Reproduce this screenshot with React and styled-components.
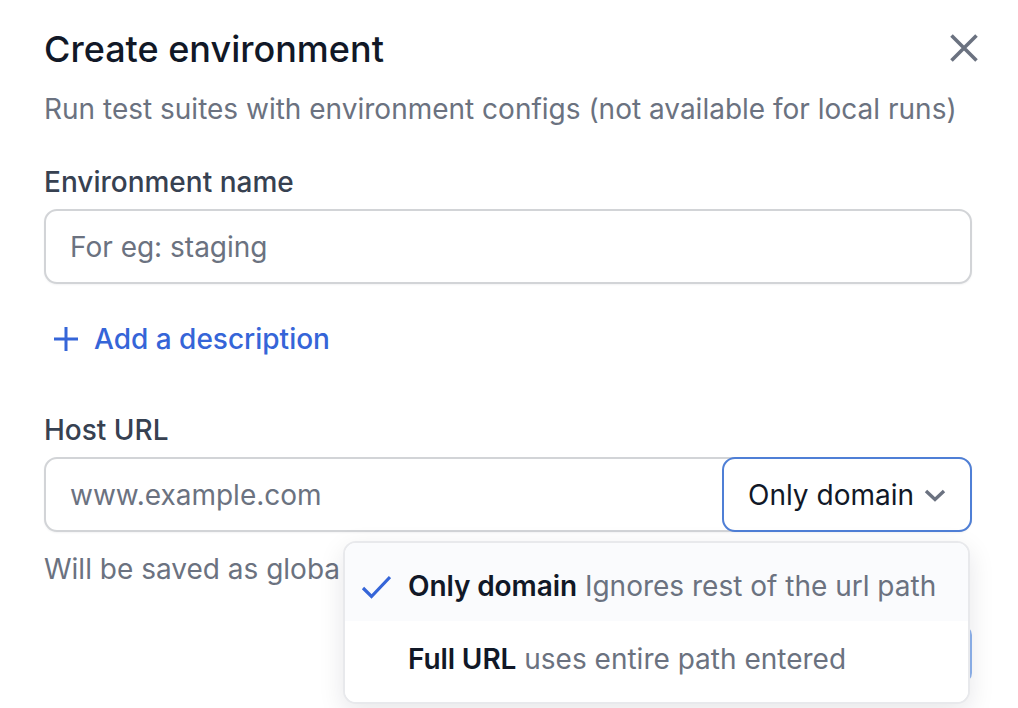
import React from 'react';
import styled, { createGlobalStyle } from 'styled-components';

const GlobalStyle = createGlobalStyle`
  html, body {
    margin: 0;
    height: 100%;
    background: #ffffff;
    overflow: hidden;
  }
  body {
    font-family: "Inter", "Liberation Sans", sans-serif;
    -webkit-font-smoothing: antialiased;
  }
`;

const Modal = styled.div`
  position: relative;
  width: 1018px;
  height: 708px;
  box-sizing: border-box;
  padding: 26px 46px 0 44px;
  overflow: hidden;
`;

const Header = styled.div`
  display: flex;
  justify-content: space-between;
  align-items: center;
  height: 46px;
`;

const Title = styled.h1`
  margin: 0;
  font-size: 36px;
  line-height: 46px;
  font-weight: 500;
  color: #111827;
`;

const CloseButton = styled.button`
  display: flex;
  padding: 0;
  margin-right: -16px;
  border: none;
  background: none;
  color: #6b7280;
`;

const Subtitle = styled.p`
  margin: 19px 0 0;
  font-size: 28px;
  line-height: 36px;
  color: #6b7280;
`;

const Label = styled.label`
  display: block;
  margin-top: ${(p) => p.$top}px;
  font-size: 28px;
  line-height: 36px;
  font-weight: 500;
  color: #374151;
`;

const InputBox = styled.div`
  display: flex;
  align-items: stretch;
  height: 75px;
  margin-top: 9px;
  box-sizing: border-box;
  border: 2px solid #d2d4d7;
  border-radius: 13px;
  background: #ffffff;
  box-shadow: 0 1px 2px rgba(17, 24, 39, 0.05);
`;

const Placeholder = styled.span`
  flex: 1;
  align-self: center;
  padding-left: 24px;
  font-size: 28px;
  line-height: 36px;
  color: #6b7280;
`;

const AddLink = styled.a`
  display: flex;
  align-items: center;
  gap: 15px;
  margin: 37px 0 0 9px;
  height: 36px;
  font-size: 28px;
  font-weight: 500;
  color: #3565d8;
`;

const SelectTrigger = styled.div`
  display: flex;
  align-items: center;
  gap: 10px;
  width: 250px;
  margin: -2px;
  padding: 0 0 0 24px;
  box-sizing: border-box;
  border: 2px solid #4f7fd6;
  border-radius: 13px;
  background: #ffffff;
  font-size: 28px;
  color: #111827;
`;

const Chevron = styled.span`
  display: flex;
  color: #6b7280;
`;

const HelpText = styled.p`
  margin: 19px 0 0;
  font-size: 28px;
  line-height: 36px;
  color: #6b7280;
`;

const Footer = styled.div`
  display: flex;
  justify-content: flex-end;
  margin-top: 38px;
`;

const SubmitButton = styled.div`
  width: 200px;
  height: 58px;
  border-radius: 10px;
  background: #8fb4ee;
`;

const Menu = styled.div`
  position: absolute;
  left: 343px;
  top: 541px;
  width: 627px;
  height: 163px;
  box-sizing: border-box;
  border: 2px solid #e8e9ec;
  border-radius: 13px;
  background: #ffffff;
  box-shadow: 0 8px 26px rgba(17, 24, 39, 0.1);
  overflow: hidden;
`;

const MenuItem = styled.div`
  display: flex;
  align-items: center;
  gap: 8px;
  height: ${(p) => p.$height}px;
  box-sizing: border-box;
  padding: ${(p) => p.$padTop}px 0 ${(p) => p.$padBottom}px 63px;
  position: relative;
  white-space: nowrap;
  font-size: 28px;
  background: ${(p) => (p.$active ? '#fafbfd' : '#ffffff')};
  color: #6b7280;
`;

const Strong = styled.strong`
  font-weight: 600;
  letter-spacing: -0.1px;
  color: #111827;
`;

const Check = styled.span`
  position: absolute;
  left: 16px;
  top: 32px;
  display: flex;
  color: #3565d8;
`;

export default function App() {
  return (
    <>
      <GlobalStyle />
      <Modal>
        <Header>
          <Title>Create environment</Title>
          <CloseButton aria-label="Close">
            <svg width="48" height="48" viewBox="0 0 48 48" fill="none" stroke="currentColor" strokeWidth="3.6">
              <path d="M11.5 10.5 L36.5 35.5 M36.5 10.5 L11.5 35.5" />
            </svg>
          </CloseButton>
        </Header>
        <Subtitle>Run test suites with environment configs (not available for local runs)</Subtitle>

        <Label $top={37}>Environment name</Label>
        <InputBox>
          <Placeholder>For eg: staging</Placeholder>
        </InputBox>

        <AddLink>
          <svg width="26" height="26" viewBox="0 0 26 26" fill="none" stroke="currentColor" strokeWidth="3">
            <path d="M13 1 V25 M1 13 H25" />
          </svg>
          Add a description
        </AddLink>

        <Label $top={55}>Host URL</Label>
        <InputBox>
          <Placeholder>www.example.com</Placeholder>
          <SelectTrigger>
            Only domain
            <Chevron>
              <svg width="22" height="14" viewBox="0 0 22 14" fill="none" stroke="currentColor" strokeWidth="3.4">
                <path d="M2 3 L11 11.5 L20 3" />
              </svg>
            </Chevron>
          </SelectTrigger>
        </InputBox>
        <HelpText>Will be saved as globa</HelpText>

        <Footer>
          <SubmitButton />
        </Footer>

        <Menu>
          <MenuItem $active $height={78} $padTop={8} $padBottom={0}>
            <Check>
              <svg width="30" height="24" viewBox="0 0 30 24" fill="none" stroke="currentColor" strokeWidth="3.2">
                <path d="M2 13 L10.5 21.5 L29 2" />
              </svg>
            </Check>
            <Strong>Only domain</Strong> Ignores rest of the url path
          </MenuItem>
          <MenuItem $height={81} $padTop={0} $padBottom={6}>
            <Strong>Full URL</Strong> uses entire path entered
          </MenuItem>
        </Menu>
      </Modal>
    </>
  );
}
